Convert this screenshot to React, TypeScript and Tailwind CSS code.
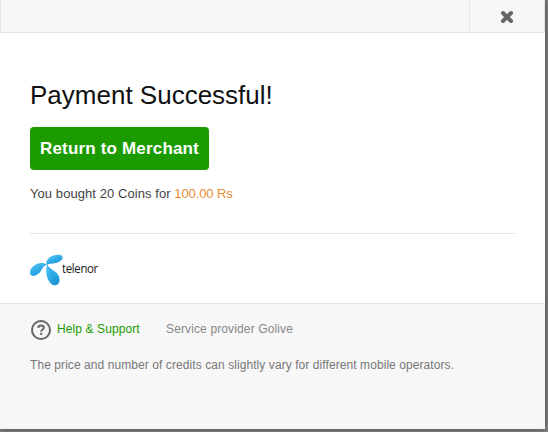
function CloseIcon() {
  return (
    <svg width="14" height="14" viewBox="0 0 14 14" fill="none" stroke="#666" strokeWidth="4" strokeLinecap="round">
      <path d="M3 3 11 11M11 3 3 11" />
    </svg>
  );
}

function HelpIcon() {
  return (
    <svg width="22" height="22" viewBox="0 0 22 22" fill="none" stroke="#666">
      <circle cx="11" cy="11" r="9" strokeWidth="2" />
      <path d="M8.2 8.9C8.3 7.2 9.4 6.4 11 6.4c1.7 0 2.8.9 2.8 2.3 0 1.8-2.6 2-2.6 4" strokeWidth="2" />
      <path d="M10.1 14.9h2.1" strokeWidth="2" />
    </svg>
  );
}

function TelenorMark() {
  return (
    <svg width="34" height="32" viewBox="0 0 34 32">
      <defs>
        <linearGradient id="petal" x1="0" y1="0" x2="0.6" y2="1">
          <stop offset="0" stopColor="#5cc6f4" />
          <stop offset="0.5" stopColor="#35b0ea" />
          <stop offset="1" stopColor="#1e93d8" />
        </linearGradient>
      </defs>
      <g fill="url(#petal)">
        <path d="M16.8 11C15.2 7 18.6 3 23.4 1.4c4.6-1.4 8.6-.8 9.1 1.3.6 2.6-2.6 5.4-6.8 6.4-3.5.8-6.3.4-8.9 1.9z" />
        <path d="M17.4 10.8C12.5 7.5 5.7 9.3 2.2 13.2c-2.6 2.9-2.8 6.8-.9 8.1 2.7 1.8 7.4-.5 9.9-4.7 1.7-2.9 2.8-5.3 6.2-5.8z" />
        <path d="M17 10.9c-1.4 4.1-1.1 9.9 1 14.5 1.9 4.1 5.1 6.7 8.4 5.6 3.5-1.2 4-5.7 1.8-9.9-2.5-4.7-8.2-6-11.2-10.2z" />
      </g>
      <path d="M17.3 11.2c1.6 4.2 5.5 8.8 7.6 14.3" fill="none" stroke="#168bd0" strokeWidth=".6" />
    </svg>
  );
}

export default function App() {
  return (
    <div className="h-[432px] w-[548px] overflow-hidden bg-[#808080] font-['Liberation_Sans',Arial,sans-serif]">
      <main className="flex h-[429px] w-[545px] flex-col bg-white shadow-[0_0_5px_#444]">
        <header className="flex h-[33px] shrink-0 justify-end border border-t-0 border-[#e5e5e5] bg-[#f7f7f7]">
          <button aria-label="Close" className="flex w-[75px] items-center justify-center border-l border-[#e5e5e5] pt-[2px]">
            <CloseIcon />
          </button>
        </header>
        <section className="flex h-[270px] shrink-0 flex-col items-start px-[30px] pt-[47px]">
          <h1 className="h-[47px] whitespace-nowrap text-[26px] leading-[30px] text-[#111]">Payment Successful!</h1>
          <button className="h-[43px] w-[179px] shrink-0 whitespace-nowrap rounded-[4px] bg-[#1b9b00] text-[17px] font-bold tracking-[0.17px] text-white">
            Return to Merchant
          </button>
          <p className="mt-[15px] whitespace-nowrap text-[13px] leading-[18px] tracking-[0.07px] text-[#444]">
            You bought 20 Coins for <span className="tracking-[-0.1px] text-[#e88b35]">100.00 Rs</span>
          </p>
          <div className="mt-[30px] flex w-[485px] border-t border-[#e5e5e5] pt-[20px]">
            <TelenorMark />
            <span className="ml-[-2px] mt-[5px] origin-left scale-x-[.88] font-['Open_Sans',sans-serif] text-[13px] leading-[18px] tracking-[-0.4px] text-[#222]">
              telenor
            </span>
          </div>
        </section>
        <footer className="grow border-t border-[#e5e5e5] bg-[#f7f7f7] px-[30px] pt-[15px] text-[12px] text-[#777]">
          <div className="flex h-[22px] items-start whitespace-nowrap leading-[20px]">
            <HelpIcon />
            <a className="ml-[5px] w-[109px] tracking-[0.1px] text-[#1b9b00]">Help &amp; Support</a>
            <span className="tracking-[0.13px] text-[#888]">Service provider Golive</span>
          </div>
          <p className="mt-[15px] whitespace-nowrap leading-[18px] tracking-[0.075px]">
            The price and number of credits can slightly vary for different mobile operators.
          </p>
        </footer>
      </main>
    </div>
  );
}
